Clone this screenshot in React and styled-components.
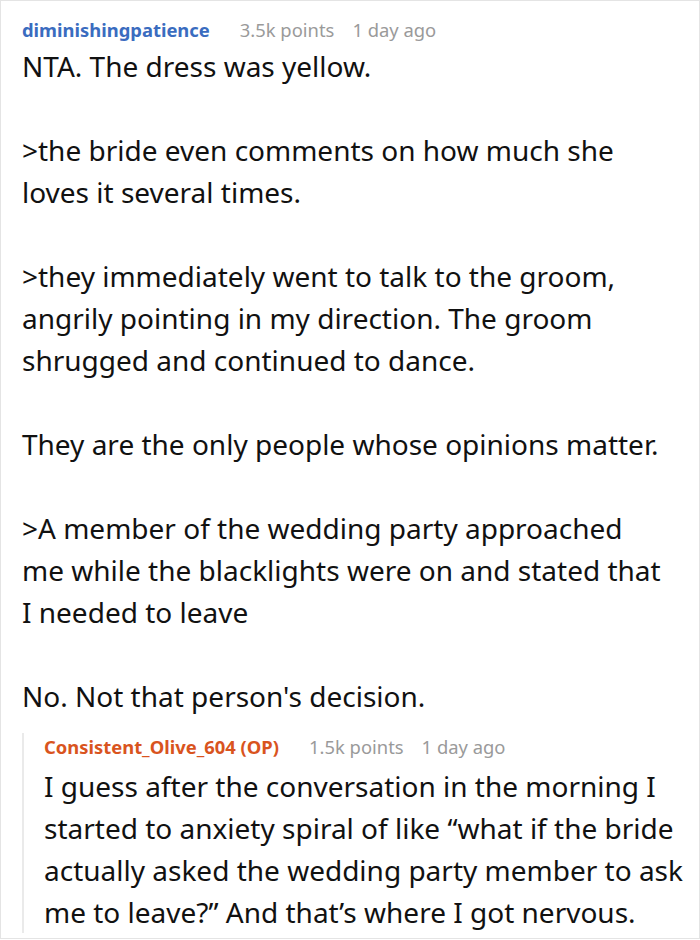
import React from "react";
import styled, { createGlobalStyle } from "styled-components";

const Global = createGlobalStyle`
  html, body { margin: 0; padding: 0; background: #fff; }
  body { font-family: "Noto Sans", "Open Sans", sans-serif; }
`;

const Card = styled.div`
  box-sizing: border-box;
  width: 700px;
  height: 939px;
  border: 1px solid #e4e4e4;
  background: #fff;
  padding: 15px 7px 0 21px;
  overflow: hidden;
`;

const Header = styled.div`
  display: flex;
  align-items: baseline;
  gap: 30px;
  font-size: 18.4px;
  line-height: 28px;
  white-space: nowrap;
`;

const User = styled.span`
  font-weight: 700;
  color: ${(p) => p.$color};
`;

const Meta = styled.span`
  color: #9a9a9a;
`;

const MetaGroup = styled.span`
  display: flex;
  gap: 18px;
`;

const Body = styled.div`
  font-size: 28px;
  line-height: 42px;
  color: #111;
  margin-top: ${(p) => p.$gap}px;
  padding-right: ${(p) => p.$inset}px;
`;

const Para = styled.p`
  margin: 0 0 42px 0;
  &:last-child { margin-bottom: 0; }
`;

const Reply = styled.div`
  margin-top: 16px;
  border-left: 2px solid #eaeaea;
  padding-left: 20px;
`;

function Comment({ user, color, points, time, paras, gap, inset }) {
  return (
    <>
      <Header>
        <User $color={color}>{user}</User>
        <MetaGroup>
          <Meta>{points}</Meta>
          <Meta>{time}</Meta>
        </MetaGroup>
      </Header>
      <Body $gap={gap} $inset={inset}>
        {paras.map((t, i) => (
          <Para key={i}>{t}</Para>
        ))}
      </Body>
    </>
  );
}

export default function App() {
  return (
    <>
      <Global />
      <Card>
        <Comment
          user="diminishingpatience"
          color="#3a6cbf"
          points="3.5k points"
          time="1 day ago"
          gap={1}
          inset={27}
          paras={[
            "NTA. The dress was yellow.",
            ">the bride even comments on how much she loves it several times.",
            ">they immediately went to talk to the groom, angrily pointing in my direction. The groom shrugged and continued to dance.",
            "They are the only people whose opinions matter.",
            ">A member of the wedding party approached me while the blacklights were on and stated that I needed to leave",
            "No. Not that person's decision.",
          ]}
        />
        <Reply>
          <Comment
            user="Consistent_Olive_604 (OP)"
            color="#d9541e"
            points="1.5k points"
            time="1 day ago"
            gap={4}
            inset={0}
            paras={[
              "I guess after the conversation in the morning I started to anxiety spiral of like \u201cwhat if the bride actually asked the wedding party member to ask me to leave?\u201d And that\u2019s where I got nervous.",
            ]}
          />
        </Reply>
      </Card>
    </>
  );
}
